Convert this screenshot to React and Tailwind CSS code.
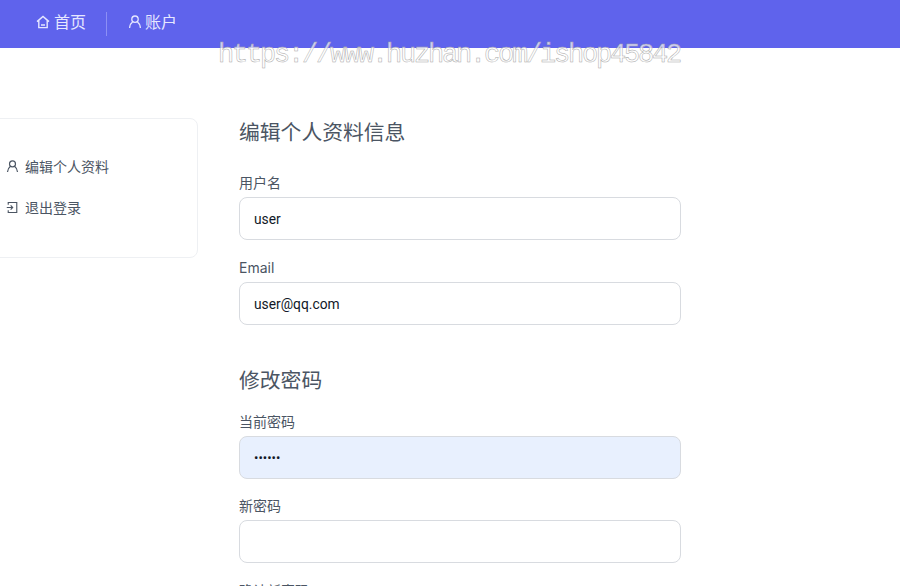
const font = "font-['Inter','Noto_Sans_CJK_SC',sans-serif]";

const HomeIcon = ({ className }) => (
  <svg viewBox="0 0 14 14" fill="none" stroke="currentColor" strokeWidth="1.4" className={className}>
    <path d="M1 6.6 7 1.4l6 5.2M2.8 5.6v7h8.4v-7M5 10h4" />
  </svg>
);

const UserIcon = ({ className }) => (
  <svg viewBox="0 0 14 14" fill="none" stroke="currentColor" strokeWidth="1.3" className={className}>
    <circle cx="7" cy="4.2" r="3.2" />
    <path d="M4.6 7C2.8 8.2 1.8 10.2 1.6 13M9.4 7c1.8 1.2 2.8 3.2 3 6" />
  </svg>
);

const ExitIcon = ({ className }) => (
  <svg viewBox="0 0 14 14" fill="none" stroke="currentColor" strokeWidth="1.2" className={className}>
    <path d="M2.4 4V1.6h9.2v10.8H2.4V10M.8 7h6.4M5 4.8 7.2 7 5 9.2" />
  </svg>
);

const Field = ({ label, value, type = "text", filled }) => (
  <div className={filled ? "mb-[13px]" : "mb-[14px]"}>
    <label className="block h-[28px] pt-[2px] text-[14px] leading-[24px] text-[#4b5563]">{label}</label>
    <input
      type={type}
      readOnly
      value={value}
      className={`block h-[43px] w-full rounded-[8px] border border-[#d8dbe0] px-[14px] font-['Roboto',sans-serif] text-[#111827] outline-none ${type === "password" ? "text-[13px]" : "text-[13.8px]"} ${filled ? "bg-[#e8f0fe]" : "bg-white"}`}
    />
  </div>
);

export default function App() {
  return (
    <div className={`relative h-[586px] w-[900px] overflow-hidden bg-white ${font}`}>
      <header className="flex h-[48px] items-center bg-[#5f63ec] pb-[4px] pl-[36px] text-[#e5e7ff]">
        <a className="flex items-center gap-[4px] text-[16px]">
          <HomeIcon className="h-[14px] w-[14px]" />
          <span>首页</span>
        </a>
        <div className="ml-[20px] mr-[21px] mt-[4px] h-[24px] w-px bg-[#8c8ff5]" />
        <a className="flex items-center gap-[3px] text-[16px]">
          <UserIcon className="h-[14px] w-[14px]" />
          <span>账户</span>
        </a>
      </header>

      <div className="flex items-start pt-[70px]">
        <aside className="ml-[-20px] flex h-[140px] w-[218px] shrink-0 flex-col justify-center gap-[18px] rounded-[8px] border border-[#eef0f3] bg-white pb-[3px] pl-[25px] text-[14px] text-[#4b5563]">
          <a className="flex h-[23px] items-center gap-[6px]">
            <UserIcon className="h-[13px] w-[13px]" />
            <span>编辑个人资料</span>
          </a>
          <a className="flex h-[23px] items-center gap-[6px]">
            <ExitIcon className="h-[13px] w-[13px]" />
            <span>退出登录</span>
          </a>
        </aside>

        <main className="ml-[41px] w-[442px] shrink-0">
          <h2 className="mb-[21px] h-[30px] text-[20.8px] leading-[30px] text-[#4b5563]">编辑个人资料信息</h2>
          <Field label="用户名" value="user" />
          <Field label="Email" value="user@qq.com" />
          <h2 className="mb-[12px] mt-[41px] h-[30px] text-[20.8px] leading-[30px] text-[#4b5563]">修改密码</h2>
          <Field label="当前密码" value="123456" type="password" filled />
          <Field label="新密码" value="" type="password" />
          <Field label="确认新密码" value="" type="password" />
        </main>
      </div>

      <div className="absolute left-[218px] top-[39px] whitespace-nowrap font-['Liberation_Mono',monospace] text-[27px] leading-[32px] tracking-[-2.2px] text-white/70 [-webkit-text-stroke:0.5px_#a8a8a8]">
        https://www.huzhan.com/ishop45842
      </div>
    </div>
  );
}
